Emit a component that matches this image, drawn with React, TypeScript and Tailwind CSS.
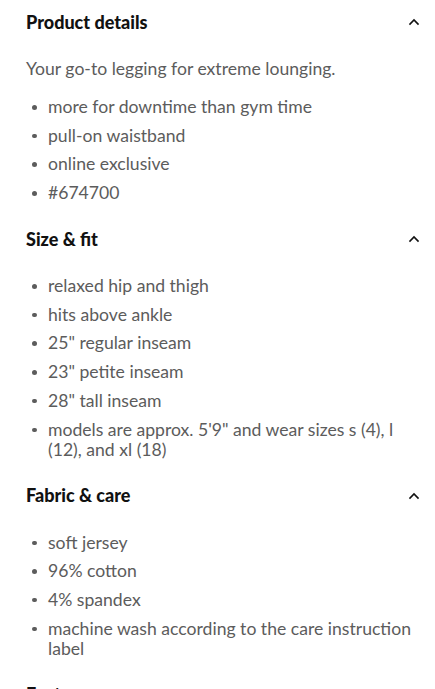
import React from "react";

const Chevron = () => (
  <svg width="12" height="8" viewBox="0 0 12 8" fill="none" className="shrink-0">
    <path d="M2 6 L6 2 L10 6" stroke="#111" strokeWidth="1.6" strokeLinecap="square" />
  </svg>
);

type Section = { title: string; intro?: string; items: string[] };

const sections: Section[] = [
  {
    title: "Product details",
    intro: "Your go-to legging for extreme lounging.",
    items: ["more for downtime than gym time", "pull-on waistband", "online exclusive", "#674700"],
  },
  {
    title: "Size & fit",
    items: [
      "relaxed hip and thigh",
      "hits above ankle",
      '25" regular inseam',
      '23" petite inseam',
      '28" tall inseam',
      'models are approx. 5\'9" and wear sizes s (4), l (12), and xl (18)',
    ],
  },
  {
    title: "Fabric & care",
    items: ["soft jersey", "96% cotton", "4% spandex", "machine wash according to the care instruction label"],
  },
];

export default function App() {
  return (
    <div
      className="w-[435px] h-[689px] overflow-hidden bg-white pl-[26px] pr-[14px]"
      style={{ fontFamily: "Lato, 'Noto Sans', sans-serif" }}
    >
      {sections.map((s) => (
        <div key={s.title}>
          <div className="h-[44px] flex items-center justify-between">
            <span className="text-[18px] font-black text-[#111]">{s.title}</span>
            <span className="pr-[1px]">
              <Chevron />
            </span>
          </div>
          <div className="pt-[15px] pb-[14px] text-[17.6px] leading-[20px] text-[#5c5c5c]">
            {s.intro && <p className="mb-[18px]">{s.intro}</p>}
            <ul className="flex flex-col gap-[8.7px]">
              {s.items.map((it) => (
                <li key={it} className="flex">
                  <span className="w-[22px] shrink-0 flex justify-start pl-[6px] pt-[8px]">
                    <span className="block w-[4.5px] h-[4.5px] rounded-full bg-[#5c5c5c]" />
                  </span>
                  <span>{it}</span>
                </li>
              ))}
            </ul>
          </div>
        </div>
      ))}
      <div className="h-[44px] flex items-center justify-between">
        <span className="text-[18px] font-black text-[#111]">Features</span>
        <Chevron />
      </div>
    </div>
  );
}
